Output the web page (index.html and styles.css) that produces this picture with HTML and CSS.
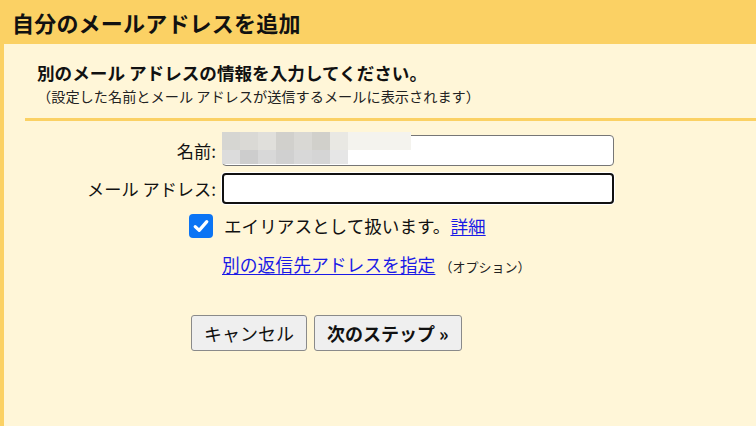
FILE: index.html
```html
<!DOCTYPE html>
<html lang="ja">
<head>
<meta charset="utf-8">
<link rel="stylesheet" href="styles.css">
</head>
<body>
<div class="page">
  <header class="title-bar">
    <h1 class="title">自分のメールアドレスを追加</h1>
  </header>
  <section class="intro">
    <h2 class="intro-heading">別のメール アドレスの情報を入力してください。</h2>
    <p class="intro-note">（設定した名前とメール アドレスが送信するメールに表示されます）</p>
  </section>
  <div class="rule"></div>
  <form class="form">
    <label class="label" for="name">名前:</label>
    <div class="field">
      <input class="input" id="name" type="text">
      <div class="blur">
        <div class="blur-row">
          <span class="px" style="background:#d6d6d2"></span><span class="px" style="background:#dad9d5"></span><span class="px" style="background:#e0dfdb"></span><span class="px" style="background:#d1d0cc"></span><span class="px" style="background:#d9d8d4"></span><span class="px" style="background:#d1d0cb"></span><span class="px" style="background:#e9e8e3"></span><span class="px wide" style="background:#f4f3ee"></span>
        </div>
        <div class="blur-row">
          <span class="px" style="background:#dcdcdc"></span><span class="px" style="background:#cdcdcd"></span><span class="px" style="background:#d8d8d8"></span><span class="px" style="background:#d0d0d0"></span><span class="px" style="background:#d8d8d8"></span><span class="px" style="background:#d5d5d5"></span><span class="px" style="background:#e6e6e6"></span>
        </div>
      </div>
    </div>
    <label class="label" for="email">メール アドレス:</label>
    <div class="field">
      <input class="input input-focus" id="email" type="text">
    </div>
    <div class="check-cell">
      <span class="checkbox">
        <svg width="24" height="24" viewBox="0 0 24 24"><path d="M6.2 12.6 L10.2 16.4 L17.8 7.6" fill="none" stroke="#fff" stroke-width="3.2" stroke-linecap="round" stroke-linejoin="round"/></svg>
      </span>
    </div>
    <div class="check-text">エイリアスとして扱います。<a class="link" href="#">詳細</a></div>
    <div class="empty"></div>
    <div class="reply-row"><a class="link" href="#">別の返信先アドレスを指定</a><span class="option">（オプション）</span></div>
  </form>
  <div class="buttons">
    <button class="btn" type="button">キャンセル</button>
    <button class="btn btn-next" type="button">次のステップ »</button>
  </div>
</div>
</body>
</html>
```

FILE: styles.css
```css
html, body {
  margin: 0;
  padding: 0;
}
body {
  background: #fff6d8;
  font-family: "Noto Sans CJK JP", "Noto Sans", sans-serif;
  color: #111;
  width: 756px;
  height: 426px;
  overflow: hidden;
}
.page {
  border-left: 4px solid #fbd164;
  height: 426px;
  box-sizing: border-box;
}
.title-bar {
  background: #fbd164;
  height: 44px;
  display: flex;
  align-items: center;
  padding-left: 8px;
}
.title {
  margin: 0;
  font-size: 22px;
  font-weight: bold;
  line-height: 1;
  letter-spacing: 0.2px;
}
.intro {
  padding: 18px 0 0 33px;
}
.intro-heading {
  margin: 0;
  font-size: 17.6px;
  font-weight: bold;
  line-height: 22px;
}
.intro-note {
  margin: 3px 0 0 0;
  font-size: 14.2px;
  line-height: 18px;
  color: #222;
}
.rule {
  margin: 13px 0 0 21px;
  height: 3px;
  background: #fbd164;
}
.form {
  display: grid;
  grid-template-columns: 212px 392px;
  column-gap: 6px;
  row-gap: 7px;
  margin-top: 14px;
  align-items: center;
}
.label {
  text-align: right;
  font-size: 17.2px;
  line-height: 22px;
  color: #111;
}
.field {
  position: relative;
  height: 31px;
}
.input {
  box-sizing: border-box;
  width: 392px;
  height: 31px;
  margin: 0;
  border: 1px solid #767676;
  border-radius: 4px;
  background: #fff;
  outline: none;
  display: block;
}
.input-focus {
  border: 2px solid #111;
  border-radius: 4px;
  box-shadow: 0 0 0 1px #fff;
}
.blur {
  position: absolute;
  left: 0;
  top: -3px;
  display: flex;
  flex-direction: column;
}
.blur-row {
  display: flex;
  height: 15px;
}
.blur-row:first-child {
  height: 18px;
}
.blur-row:last-child {
  height: 14px;
}
.px {
  display: block;
  width: 18px;
}
.px.wide {
  width: 63px;
}
.check-cell {
  display: flex;
  justify-content: flex-end;
  padding-right: 3px;
  margin-top: 3px;
}
.checkbox {
  width: 24px;
  height: 24px;
  border-radius: 4px;
  background: #0b74f4;
  display: block;
}
.checkbox svg {
  display: block;
}
.check-text {
  font-size: 17.6px;
  line-height: 24px;
  padding-left: 2px;
  margin-top: 3px;
}
.link {
  color: #1a1ae6;
  text-decoration: underline;
  text-underline-offset: 2px;
}
.reply-row {
  margin-top: 7px;
  font-size: 17.8px;
  line-height: 24px;
}
.option {
  font-size: 13px;
  margin-left: 4px;
  color: #222;
}
.buttons {
  display: flex;
  gap: 7px;
  margin: 36px 0 0 187px;
}
.btn {
  font-family: "Noto Sans CJK JP", "Noto Sans", sans-serif;
  font-size: 18px;
  height: 36px;
  padding: 0 12px;
  background: #efefef;
  border: 1px solid #8a8a8a;
  border-radius: 3px;
  color: #111;
  line-height: 1;
  box-sizing: border-box;
}
.btn-next {
  font-weight: bold;
}
```
